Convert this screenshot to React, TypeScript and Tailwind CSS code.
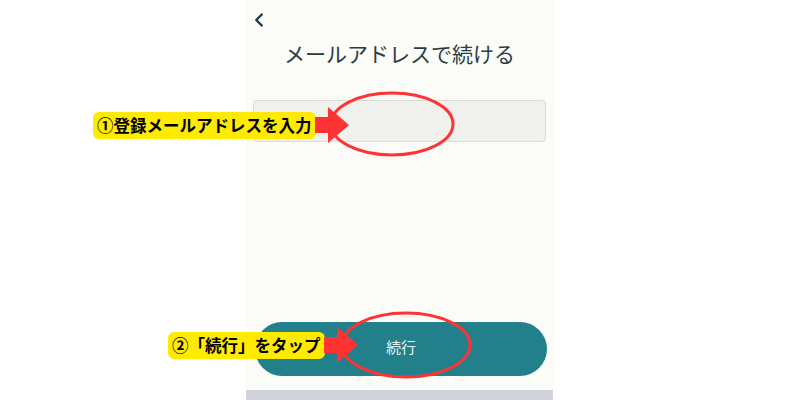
import { ChevronLeft } from 'lucide-react';

const jp = '[font-family:"Noto_Sans_CJK_JP","Noto_Sans",sans-serif]';

function Callout({ text, className }: { text: string; className: string }) {
  return (
    <div className={`absolute flex items-center ${className}`}>
      <div className={`bg-[#ffeb00] rounded-[6px] h-[27px] px-[4px] flex items-center text-[16.5px] font-bold text-black leading-none ${jp}`}>
        {text}
      </div>
      <svg width="34" height="36" viewBox="0 0 34 36" className="-ml-[1px]">
        <polygon points="0,10 13,10 13,0 34,18 13,36 13,26 0,26" fill="#ff3333" />
      </svg>
    </div>
  );
}

export default function App() {
  return (
    <div className={`relative w-[800px] h-[400px] bg-white flex overflow-hidden ${jp}`}>
      <div className="w-[246px]" />

      {/* phone screen */}
      <div className="w-[307px] h-full bg-[#fbfbf7] flex flex-col">
        <div className="flex-1 flex flex-col px-[7px]">
          <button className="mt-[9px] h-[22px] w-[22px] -ml-[5px] text-[#1f3a44]">
            <ChevronLeft size={22} strokeWidth={2.6} />
          </button>
          <h1 className="mt-[7px] text-center text-[21px] font-normal text-[#2a3d43] leading-[30px]">
            メールアドレスで続ける
          </h1>
          <div className="mt-[32px] h-[42px] w-[293px] bg-[#f0f0ec] border border-[#dcdcd6] rounded-[4px]" />
          <div className="flex-1" />
          <button className="mb-[14px] ml-[2px] h-[54px] w-[292px] rounded-full bg-[#21808a] text-[#e8f2f2] text-[15px] flex items-center justify-center pb-[3px]">
            続行
          </button>
        </div>
        <div className="h-[10px] bg-[#d1d3da]" />
      </div>

      <div className="flex-1" />

      {/* annotations */}
      <svg className="absolute left-0 top-0 pointer-events-none" width="800" height="400">
        <ellipse cx="392" cy="124" rx="61" ry="31" fill="none" stroke="#ff3333" strokeWidth="3" />
        <ellipse cx="406" cy="345" rx="64" ry="32" fill="none" stroke="#ff3333" strokeWidth="3" />
      </svg>
      <Callout text="①登録メールアドレスを入力" className="left-[93px] top-[107px]" />
      <Callout text="②「続行」をタップ" className="left-[168px] top-[327px]" />
    </div>
  );
}
